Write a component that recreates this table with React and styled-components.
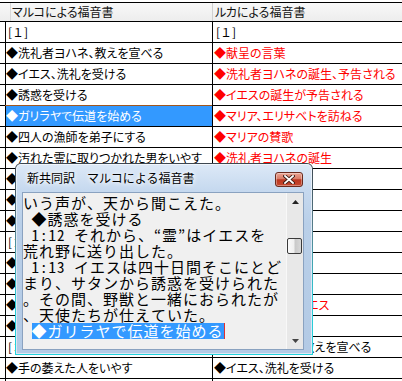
import React from "react";
import styled, { createGlobalStyle } from "styled-components";

const GlobalStyle = createGlobalStyle`
  html, body {
    margin: 0;
    padding: 0;
    background: #fff;
  }
`;

const UI_FONT = `"Noto Sans CJK JP", "Liberation Sans", sans-serif`;
const MONO_FONT = `"Noto Sans Mono CJK JP", "Noto Sans CJK JP", monospace`;

const Screen = styled.div`
  position: relative;
  width: 402px;
  height: 381px;
  overflow: hidden;
  box-sizing: border-box;
  padding-top: 2px;
  background: #fff;
  font-family: ${UI_FONT};
`;

const Sheet = styled.div`
  border-top: 1px solid #000;
`;

const HeaderRow = styled.div`
  display: flex;
  height: 18px;
  background: linear-gradient(#f8f8f8, #ededed);
  border-bottom: 1px solid #000;
`;

const HeaderGutter = styled.div`
  flex: none;
  width: 10px;
  border-right: 1px solid #d8d8d8;
`;

const HeaderCell = styled.div`
  flex: ${(p) => (p.$last ? "1" : "none")};
  width: ${(p) => (p.$last ? "auto" : "200px")};
  padding-left: ${(p) => (p.$last ? "2px" : "1px")};
  border-right: ${(p) => (p.$last ? "none" : "1px solid #d0d0d0")};
  font-size: 12px;
  line-height: 18px;
  color: #111;
  white-space: nowrap;
  font-feature-settings: "palt";
`;

const Row = styled.div`
  display: flex;
  height: 20px;
  border-bottom: 1px solid #000;
`;

const Gutter = styled.div`
  flex: none;
  width: 5px;
`;

const Cell = styled.div`
  flex: ${(p) => (p.$last ? "1" : "none")};
  width: ${(p) => (p.$last ? "auto" : "207px")};
  box-sizing: border-box;
  border-left: 1px solid #000;
  padding-left: ${(p) => (p.$last ? "1px" : "0")};
  font-size: 12px;
  line-height: 20px;
  white-space: nowrap;
  overflow: hidden;
  font-feature-settings: "palt";
  color: ${(p) => (p.$selected ? "#fff" : p.$red ? "#ff0000" : "#000")};
  background: ${(p) => (p.$selected ? "#3399ff" : "transparent")};
  box-shadow: ${(p) =>
    p.$selected ? "0 -1px 0 #a0561e, 1px 0 0 #a0561e" : "none"};
`;

/* chapter markers keep the full-width digit */
const Chapter = styled.span`
  padding-left: 2px;
  font-feature-settings: normal;
`;

/* floating reader window */
const Window = styled.div`
  position: absolute;
  left: 15px;
  top: 163px;
  width: 298px;
  height: 192px;
  box-sizing: border-box;
  padding: 1px;
  border-radius: 6px 6px 0 0;
  background: linear-gradient(#3d4650 0%, #56808e 35%, #2cc8d4 70%, #22d2dc 100%);
`;

const Frame = styled.div`
  height: 100%;
  box-sizing: border-box;
  display: flex;
  flex-direction: column;
  padding: 0 8px 4px 6px;
  border-radius: 5px 5px 0 0;
  background: linear-gradient(#dde9f7 0px, #c6d9ef 26px, #b9cfe8 60px, #b3cae5 100%);
  box-shadow: inset 0 0 0 1px rgba(255, 255, 255, 0.55);
`;

const TitleBar = styled.div`
  flex: none;
  height: 28px;
  display: flex;
  align-items: flex-start;
`;

const Title = styled.div`
  flex: 1;
  padding: 6px 0 0 5px;
  font-size: 12px;
  line-height: 16px;
  color: #000;
  white-space: pre;
  text-shadow: 0 0 4px #fff, 0 0 6px #fff;
`;

const CloseButton = styled.div`
  flex: none;
  width: 28px;
  height: 15px;
  margin: 8px 1px 0 0;
  box-sizing: border-box;
  border: 1px solid #6a2a1e;
  border-radius: 3px;
  background: linear-gradient(#eaa594 0%, #d97a66 45%, #bb3620 52%, #c64a30 100%);
  box-shadow: inset 0 0 0 1px rgba(255, 255, 255, 0.35);
  display: flex;
  align-items: center;
  justify-content: center;
`;

const TextBox = styled.div`
  flex: 1;
  display: flex;
  min-height: 0;
  border: 1px solid #8aa2c0;
  background: #f0f0f0;
`;

const Passage = styled.div`
  flex: 1;
  padding-top: 2px;
  overflow: hidden;
  font-family: ${MONO_FONT};
  font-size: 15px;
  letter-spacing: 1px;
  color: #000;
`;

const Line = styled.div`
  height: 16px;
  line-height: 16px;
  white-space: pre;
`;

const Selection = styled.span`
  display: inline-block;
  height: 16px;
  line-height: 16px;
  background: #3399ff;
  color: #fff;
  border-right: 1px solid #e03030;
`;

const ScrollBar = styled.div`
  flex: none;
  width: 16px;
  display: flex;
  flex-direction: column;
  background: #e8e8e8;
  border-left: 1px solid #f8f8f8;
`;

const Arrow = styled.div`
  flex: none;
  height: 17px;
  display: flex;
  align-items: center;
  justify-content: center;
`;

const Track = styled.div`
  flex: 1;
`;

const Thumb = styled.div`
  width: 15px;
  height: 16px;
  box-sizing: border-box;
  margin-top: ${(p) => p.$offset}px;
  border: 1px solid #3a3a3a;
  border-radius: 2px;
  background: linear-gradient(90deg, #fafafa 0%, #f0f0f0 45%, #c9c9c9 55%, #d8d8d8 100%);
`;

const mark = [
  { ch: "[１]" },
  { t: "◆洗礼者ヨハネ、教えを宣べる" },
  { t: "◆イエス、洗礼を受ける" },
  { t: "◆誘惑を受ける" },
  { t: "◆ガリラヤで伝道を始める", selected: true },
  { t: "◆四人の漁師を弟子にする" },
  { t: "◆汚れた霊に取りつかれた男をいやす" },
  { t: "◆多くの病人をいやす" },
  { t: "◆巡回して宣教する" },
  { t: "◆重い皮膚病を患っている人をいやす" },
  { ch: "[２]" },
  { t: "◆中風の人をいやす" },
  { t: "◆レビを弟子にする" },
  { t: "◆断食についての問答" },
  { t: "◆安息日に麦の穂を摘む" },
  { ch: "[３]" },
  { t: "◆手の萎えた人をいやす" },
  { t: "" },
];

const luke = [
  { ch: "[１]" },
  { t: "◆献呈の言葉", red: true },
  { t: "◆洗礼者ヨハネの誕生、予告される", red: true },
  { t: "◆イエスの誕生が予告される", red: true },
  { t: "◆マリア、エリサベトを訪ねる", red: true },
  { t: "◆マリアの賛歌", red: true },
  { t: "◆洗礼者ヨハネの誕生", red: true },
  { t: "◆ザカリアの預言", red: true },
  { ch: "[２]" },
  { t: "◆イエスの誕生", red: true },
  { t: "◆羊飼いと天使", red: true },
  { t: "" },
  { t: "" },
  { t: "◆神殿での少年イエス", red: true },
  { ch: "[３]" },
  { t: "◆洗礼者ヨハネ、教えを宣べる" },
  { t: "◆イエス、洗礼を受ける" },
  { t: "" },
];

const passage = [
  { t: "いう声が、天から聞こえた。" },
  { t: " ◆誘惑を受ける" },
  { t: " 1:12 それから、“霊”はイエスを" },
  { t: "荒れ野に送り出した。" },
  { t: " 1:13 イエスは四十日間そこにとど" },
  { t: "まり、サタンから誘惑を受けられた" },
  { t: "。その間、野獣と一緒におられたが" },
  { t: "、天使たちが仕えていた。" },
  { t: " ", sel: "◆ガリラヤで伝道を始める" },
];

const CloseGlyph = () => (
  <svg width="12" height="9" viewBox="0 0 12 9">
    <path d="M2 1 L10 8 M10 1 L2 8" stroke="#3b1a14" strokeWidth="3.6" strokeLinecap="square" />
    <path d="M2 1 L10 8 M10 1 L2 8" stroke="#fff" strokeWidth="1.8" strokeLinecap="square" />
  </svg>
);

const UpGlyph = () => (
  <svg width="7" height="4" viewBox="0 0 7 4">
    <path d="M3.5 0 L7 4 L0 4 Z" fill="#222" />
  </svg>
);

const DownGlyph = () => (
  <svg width="7" height="4" viewBox="0 0 7 4">
    <path d="M0 0 L7 0 L3.5 4 Z" fill="#444" />
  </svg>
);

const CellText = ({ item }) =>
  item.ch ? <Chapter>{item.ch}</Chapter> : item.t;

export default function App() {
  return (
    <>
      <GlobalStyle />
      <Screen>
        <Sheet>
          <HeaderRow>
            <HeaderGutter />
            <HeaderCell>マルコによる福音書</HeaderCell>
            <HeaderCell $last>ルカによる福音書</HeaderCell>
          </HeaderRow>
          {mark.map((m, i) => (
            <Row key={i}>
              <Gutter />
              <Cell $selected={m.selected}>
                <CellText item={m} />
              </Cell>
              <Cell $last $red={luke[i].red}>
                <CellText item={luke[i]} />
              </Cell>
            </Row>
          ))}
        </Sheet>

        <Window>
          <Frame>
            <TitleBar>
              <Title>新共同訳　マルコによる福音書</Title>
              <CloseButton>
                <CloseGlyph />
              </CloseButton>
            </TitleBar>
            <TextBox>
              <Passage>
                {passage.map((l, i) => (
                  <Line key={i}>
                    {l.t}
                    {l.sel && <Selection>{l.sel}</Selection>}
                  </Line>
                ))}
              </Passage>
              <ScrollBar>
                <Arrow>
                  <UpGlyph />
                </Arrow>
                <Track>
                  <Thumb $offset={28} />
                </Track>
                <Arrow>
                  <DownGlyph />
                </Arrow>
              </ScrollBar>
            </TextBox>
          </Frame>
        </Window>
      </Screen>
    </>
  );
}
